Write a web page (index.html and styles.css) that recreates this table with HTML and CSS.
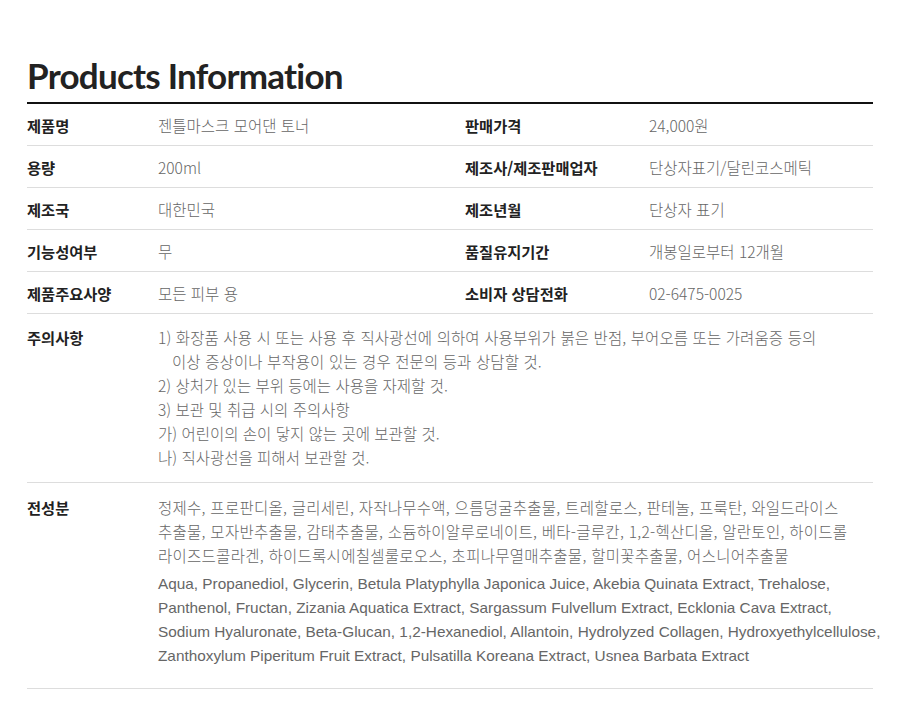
FILE: index.html
```html
<!DOCTYPE html>
<html lang="ko">
<head>
<meta charset="utf-8">
<title>Products Information</title>
<link rel="stylesheet" href="styles.css">
</head>
<body>
<section class="info">
  <h1 class="title">Products Information</h1>
  <div class="table">
    <div class="row">
      <div class="label">제품명</div><div class="value">젠틀마스크 모어댄 토너</div>
      <div class="label">판매가격</div><div class="value">24,000원</div>
    </div>
    <div class="row">
      <div class="label">용량</div><div class="value">200ml</div>
      <div class="label">제조사/제조판매업자</div><div class="value">단상자표기/달린코스메틱</div>
    </div>
    <div class="row">
      <div class="label">제조국</div><div class="value">대한민국</div>
      <div class="label">제조년월</div><div class="value">단상자 표기</div>
    </div>
    <div class="row">
      <div class="label">기능성여부</div><div class="value">무</div>
      <div class="label">품질유지기간</div><div class="value">개봉일로부터 12개월</div>
    </div>
    <div class="row">
      <div class="label">제품주요사양</div><div class="value">모든 피부 용</div>
      <div class="label">소비자 상담전화</div><div class="value">02-6475-0025</div>
    </div>
    <div class="row row-wide row-notes">
      <div class="label">주의사항</div>
      <div class="value wide">
        <p class="hang">1) 화장품 사용 시 또는 사용 후 직사광선에 의하여 사용부위가 붉은 반점, 부어오름 또는 가려움증 등의<br>이상 증상이나 부작용이 있는 경우 전문의 등과 상담할 것.</p>
        <p>2) 상처가 있는 부위 등에는 사용을 자제할 것.</p>
        <p>3) 보관 및 취급 시의 주의사항</p>
        <p>가) 어린이의 손이 닿지 않는 곳에 보관할 것.</p>
        <p>나) 직사광선을 피해서 보관할 것.</p>
      </div>
    </div>
    <div class="row row-wide row-ingredients">
      <div class="label">전성분</div>
      <div class="value wide">
        <p class="ko">정제수, 프로판디올, 글리세린, 자작나무수액, 으름덩굴추출물, 트레할로스, 판테놀, 프룩탄, 와일드라이스<br>추출물, 모자반추출물, 감태추출물, 소듐하이알루로네이트, 베타-글루칸, 1,2-헥산디올, 알란토인, 하이드롤<br>라이즈드콜라겐, 하이드록시에칠셀룰로오스, 초피나무열매추출물, 할미꽃추출물, 어스니어추출물</p>
        <p class="en">Aqua, Propanediol, Glycerin, Betula Platyphylla Japonica Juice, Akebia Quinata Extract, Trehalose,<br>Panthenol, Fructan, Zizania Aquatica Extract, Sargassum Fulvellum Extract, Ecklonia Cava Extract,<br>Sodium Hyaluronate, Beta-Glucan, 1,2-Hexanediol, Allantoin, Hydrolyzed Collagen, Hydroxyethylcellulose,<br>Zanthoxylum Piperitum Fruit Extract, Pulsatilla Koreana Extract, Usnea Barbata Extract</p>
      </div>
    </div>
  </div>
</section>
</body>
</html>
```

FILE: styles.css
```css
* { box-sizing: border-box; }
html, body { margin: 0; padding: 0; background: #fff; }
body {
  font-family: "Noto Sans CJK KR", "Noto Sans", sans-serif;
  color: #666;
}
.info {
  width: 846px;
  margin: 0 0 0 27px;
  padding-top: 52px;
}
.title {
  margin: 0;
  font-family: Lato, "Noto Sans", sans-serif;
  font-weight: 700;
  font-size: 35px;
  line-height: 46px;
  letter-spacing: -0.75px;
  color: #222;
  padding-bottom: 4px;
  border-bottom: 2px solid #111;
}
.row {
  display: grid;
  grid-template-columns: 131px 307px 184px 224px;
  align-items: center;
  height: 42px;
  border-bottom: 1px solid #ddd;
}
.label {
  font-size: 15.3px;
  font-weight: 700;
  color: #222;
}
.value {
  font-size: 15.5px;
  font-weight: 300;
  color: #666;
}
.row-wide {
  height: auto;
  align-items: start;
  grid-template-columns: 131px 715px;
}
.row-wide .label { line-height: 24px; }
.wide p { margin: 0; line-height: 24px; white-space: nowrap; }
.hang { padding-left: 14px; text-indent: -14px; letter-spacing: 0.1px; }
.row-notes { padding: 11px 0 13px; }
.row-ingredients { padding: 12px 0 20px; }
.ko { letter-spacing: 0.27px; }
.en {
  margin-top: 5px !important;
  font-family: "Liberation Sans", Arial, sans-serif;
  font-weight: 400;
  font-size: 15.35px;
}
```
